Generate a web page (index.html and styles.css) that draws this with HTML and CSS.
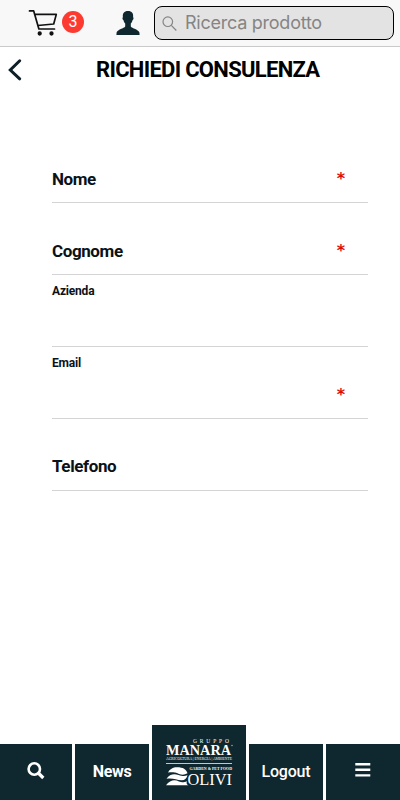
FILE: index.html
```html
<!DOCTYPE html>
<html lang="it">
<head>
    <meta charset="UTF-8">
    <meta name="viewport" content="width=device-width, initial-scale=1.0">
    <title>Richiedi consulenza</title>
    <link rel="stylesheet" href="styles.css">
</head>
<body>

    <header class="topbar">
        <a class="cart" href="#">
            <svg width="30" height="28" viewBox="0 0 30 28" fill="none" stroke="#111" stroke-width="1.7" stroke-linecap="round" stroke-linejoin="round">
                <path d="M1.500 1.900h4.200l5.200 18.100h15.600M7 5.400h21.300l-2.600 9.600-15.800 1.500"/>
                <circle cx="11.700" cy="24.500" r="1.300" fill="#111"/>
                <circle cx="23.500" cy="24.500" r="1.300" fill="#111"/>
            </svg>
            <span class="badge">3</span>
        </a>
        <a class="user" href="#">
            <svg width="24" height="26" viewBox="0 0 24 26" fill="#0f272e">
                <path d="M12 1c4 0 5.500 2.300 5.100 6.200.8.300.5 2.500-.6 3-.4 1.800-1 2.700-1.700 3.400v2.800c1 1.900 8.100 3 8.600 6.200L23.600 25H.4l.2-2.400c.5-3.200 7.600-4.300 8.600-6.200v-2.800c-.7-.7-1.300-1.600-1.700-3.400-1.100-.5-1.400-2.700-.6-3C6.500 3.300 8 1 12 1z"/>
            </svg>
        </a>
        <div class="search">
            <svg width="16" height="16" viewBox="0 0 16 16" fill="none" stroke="#858585" stroke-width="1.200">
                <circle cx="5.800" cy="6.700" r="4.800"/>
                <path d="M9.300 10.300l5 5.200"/>
            </svg>
            <span>Ricerca prodotto</span>
        </div>
    </header>

    <div class="title-row">
        <a class="back" href="#">
            <svg width="16" height="24" viewBox="0 0 16 24" fill="none" stroke="#0f1f28" stroke-width="3" stroke-linecap="round">
                <path d="M12.700 2.800L3.300 12l9.400 8.800"/>
            </svg>
        </a>
        <h1>RICHIEDI CONSULENZA</h1>
    </div>

    <main class="form">
        <div class="field">
            <span class="label nome">Nome</span>
            <span class="required">*</span>
        </div>
        <div class="field">
            <span class="label cognome">Cognome</span>
            <span class="required">*</span>
        </div>
        <div class="field floating">
            <span class="label azienda">Azienda</span>
        </div>
        <div class="field floating">
            <span class="label email">Email</span>
            <span class="required">*</span>
        </div>
        <div class="field">
            <span class="label telefono">Telefono</span>
        </div>
    </main>

    <nav class="tabbar">
        <a class="tab search-tab" href="#">
            <svg width="18" height="18" viewBox="0 0 18 18" fill="none" stroke="#fff" stroke-width="2.600">
                <circle cx="7.300" cy="7" r="5.700"/>
                <path d="M11.300 11l5 5" stroke-width="3.200"/>
            </svg>
        </a>
        <a class="tab news" href="#">News</a>
        <a class="tab home" href="#">
            <svg width="94" height="75" viewBox="0 0 94 75" fill="#fff" font-family="'Liberation Serif', serif">
                <text x="41" y="17.500" font-size="5.500" textLength="36">GRUPPO</text>
                <text x="14" y="30.300" font-size="14" font-weight="bold" textLength="65" lengthAdjust="spacingAndGlyphs">MANARA</text>
                <circle cx="80" cy="20.500" r=".7" opacity=".7"/>
                <text x="14" y="34.800" font-size="3.600" textLength="66" lengthAdjust="spacingAndGlyphs">AGRICOLTURA | ENERGIA | AMBIENTE</text>
                <path d="M14 38.300h66v.8H14z"/>
                <text x="37.500" y="45.200" font-size="4" font-weight="bold" textLength="42.500" lengthAdjust="spacingAndGlyphs">GARDEN &amp; PET FOOD</text>
                <path d="M16 47.500c1.500-3.300 5-5.300 9-5.300 6 0 9.500 2.100 10.500 6.100-3 1.700-5.500 1.800-8.500.6-4-1.700-7-1.700-11-1.400z"/>
                <path d="M14.500 53.800c3-4.300 7-5.300 12-3.800 4 1.200 6 1.200 9 .3-1 3.500-3 5.200-6 5-5-.3-9-2.600-15-1.500z"/>
                <path d="M14 60.300c4-5.600 9-6 13-3.800 3 1.300 5 .8 8-.3-1 2.200 0 3.500 1.500 4.100H14z"/>
                <text x="35.500" y="60" font-size="17" textLength="44.500" lengthAdjust="spacingAndGlyphs">OLIVI</text>
            </svg>
        </a>
        <a class="tab logout" href="#">Logout</a>
        <a class="tab menu" href="#">
            <svg width="16" height="16" viewBox="0 0 16 16" fill="#fff">
                <path d="M.3 0h15v2.400H.3zM.3 5.600h15V8H.3zM.3 11.200h15v2.400H.3z"/>
            </svg>
        </a>
    </nav>

</body>
</html>
```
FILE: styles.css
```css
* {
    box-sizing: border-box;
}

body {
    margin: 0;
    height: 800px;
    display: flex;
    flex-direction: column;
    background-color: #fff;
    color: #0a1218;
    font-family: Roboto, sans-serif;
    overflow: hidden;
}

a {
    color: inherit;
    text-decoration: none;
}

svg {
    display: block;
    flex: none;
}

/* Barra superiore */
.topbar {
    display: flex;
    align-items: center;
    height: 47px;
    padding: 0 6px 1px 28px;
    background-color: #f8f8f8;
    border-bottom: 1px solid #c9c9c9;
}

.cart {
    display: flex;
    align-items: center;
    gap: 4px;
}

.badge {
    width: 22px;
    height: 22px;
    margin-top: -2px;
    border-radius: 50%;
    background-color: #fc3a30;
    color: #fff;
    font-size: 16px;
    line-height: 22px;
    text-align: center;
}

.user {
    margin-left: 32px;
}

.search {
    display: flex;
    align-items: center;
    gap: 7px;
    width: 240px;
    height: 34px;
    margin-left: auto;
    padding-left: 7px;
    border: 1px solid #000;
    border-radius: 8px;
    background-color: #e3e3e3;
    color: #858585;
    font-family: Inter, sans-serif;
    font-size: 18px;
    letter-spacing: -0.25px;
}

/* Titolo */
.title-row {
    display: flex;
    align-items: center;
    height: 45px;
    padding-left: 7px;
}

.back {
    width: 89px;
}

h1 {
    margin: 0;
    color: #000;
    font-size: 22px;
    line-height: 26px;
    letter-spacing: -0.7px;
    white-space: nowrap;
}

/* Campi del modulo */
.form {
    flex: 1;
    padding: 39px 32px 0 52px;
}

.field {
    display: flex;
    justify-content: space-between;
    height: 72px;
    padding: 37px 23px 0 0;
    border-bottom: 1px solid #d4d4d4;
    font-size: 17px;
    font-weight: bold;
    line-height: 22px;
}

.nome,
.cognome,
.telefono {
    letter-spacing: -0.4px;
}

.telefono {
    margin-top: -1px;
}

.floating {
    padding-top: 7px;
}

.floating .label {
    font-size: 12px;
    line-height: 18px;
    letter-spacing: -0.2px;
}

.required {
    color: #d90d0d;
    font-family: "DejaVu Sans", sans-serif;
    font-size: 16px;
    line-height: 22px;
}

.floating .required {
    margin-top: 30px;
}

/* Menu in basso */
.tabbar {
    display: grid;
    grid-template-columns: 72px 74px 94px 74px 74px;
    column-gap: 3px;
    align-items: end;
    height: 75px;
}

.tab {
    display: flex;
    align-items: center;
    justify-content: center;
    height: 56px;
    padding-bottom: 2px;
    background-color: #0f272e;
    color: #fff;
    font-size: 16px;
    font-weight: 500;
}

.search-tab {
    padding-right: 1px;
}

.news {
    font-weight: bold;
    letter-spacing: -0.3px;
}

.logout {
    letter-spacing: -0.2px;
}

.home {
    height: 75px;
    padding-bottom: 0;
}

.menu {
    padding-right: 1px;
}
```
